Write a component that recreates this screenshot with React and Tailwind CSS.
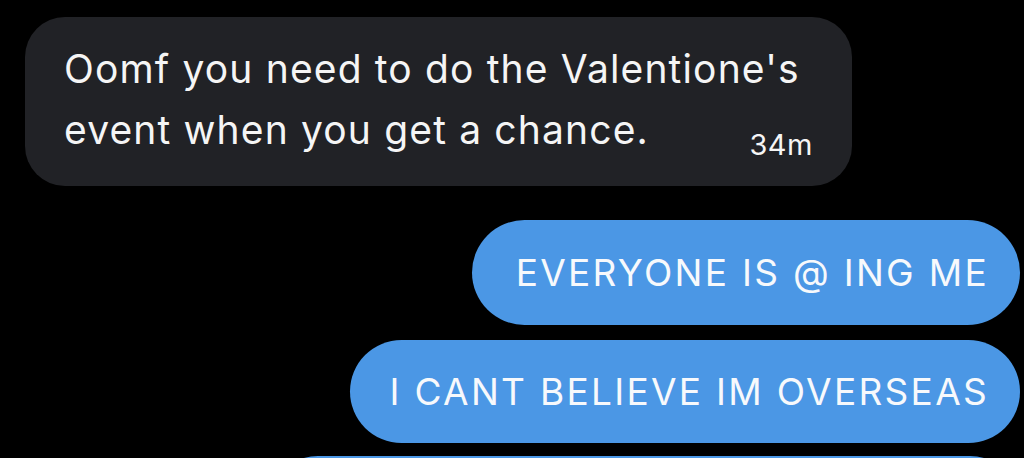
const sans = { fontFamily: '"Inter", "Liberation Sans", sans-serif' };

const Outgoing = ({ width, height, children }) => (
    <div
        className="flex items-center justify-end rounded-full bg-[#4b97e5] pr-[31px] text-[#f7f9fc] text-[37px] tracking-[2.3px]"
        style={{ width, height }}
    >
        {children}
    </div>
);

const App = () => {
    return (
        <div className="w-[1024px] h-[458px] overflow-hidden bg-black" style={sans}>
            <div className="pt-[17px] pl-[25px]">
                <div className="relative w-[827px] h-[169px] rounded-[40px] bg-[#212226] pl-[39px] pt-[21px] text-[#f5f5f5]">
                    <p className="text-[39px] leading-[61px] tracking-[1.15px]">
                        Oomf you need to do the Valentione's
                        <br />
                        event when you get a chance.
                    </p>
                    <span className="absolute right-[39px] bottom-[27px] text-[29px] leading-none tracking-[0.5px]">34m</span>
                </div>
            </div>

            <div className="flex flex-col items-end pr-[4px] mt-[34px]">
                <Outgoing width={548} height={105}>
                    EVERYONE IS @ ING ME
                </Outgoing>
                <div className="h-[15px]" />
                <Outgoing width={670} height={103}>
                    I CANT BELIEVE IM OVERSEAS
                </Outgoing>
                <div className="h-[13px]" />
                <Outgoing width={752} height={100}>
                    <span />
                </Outgoing>
            </div>
        </div>
    );
};

export default App;
